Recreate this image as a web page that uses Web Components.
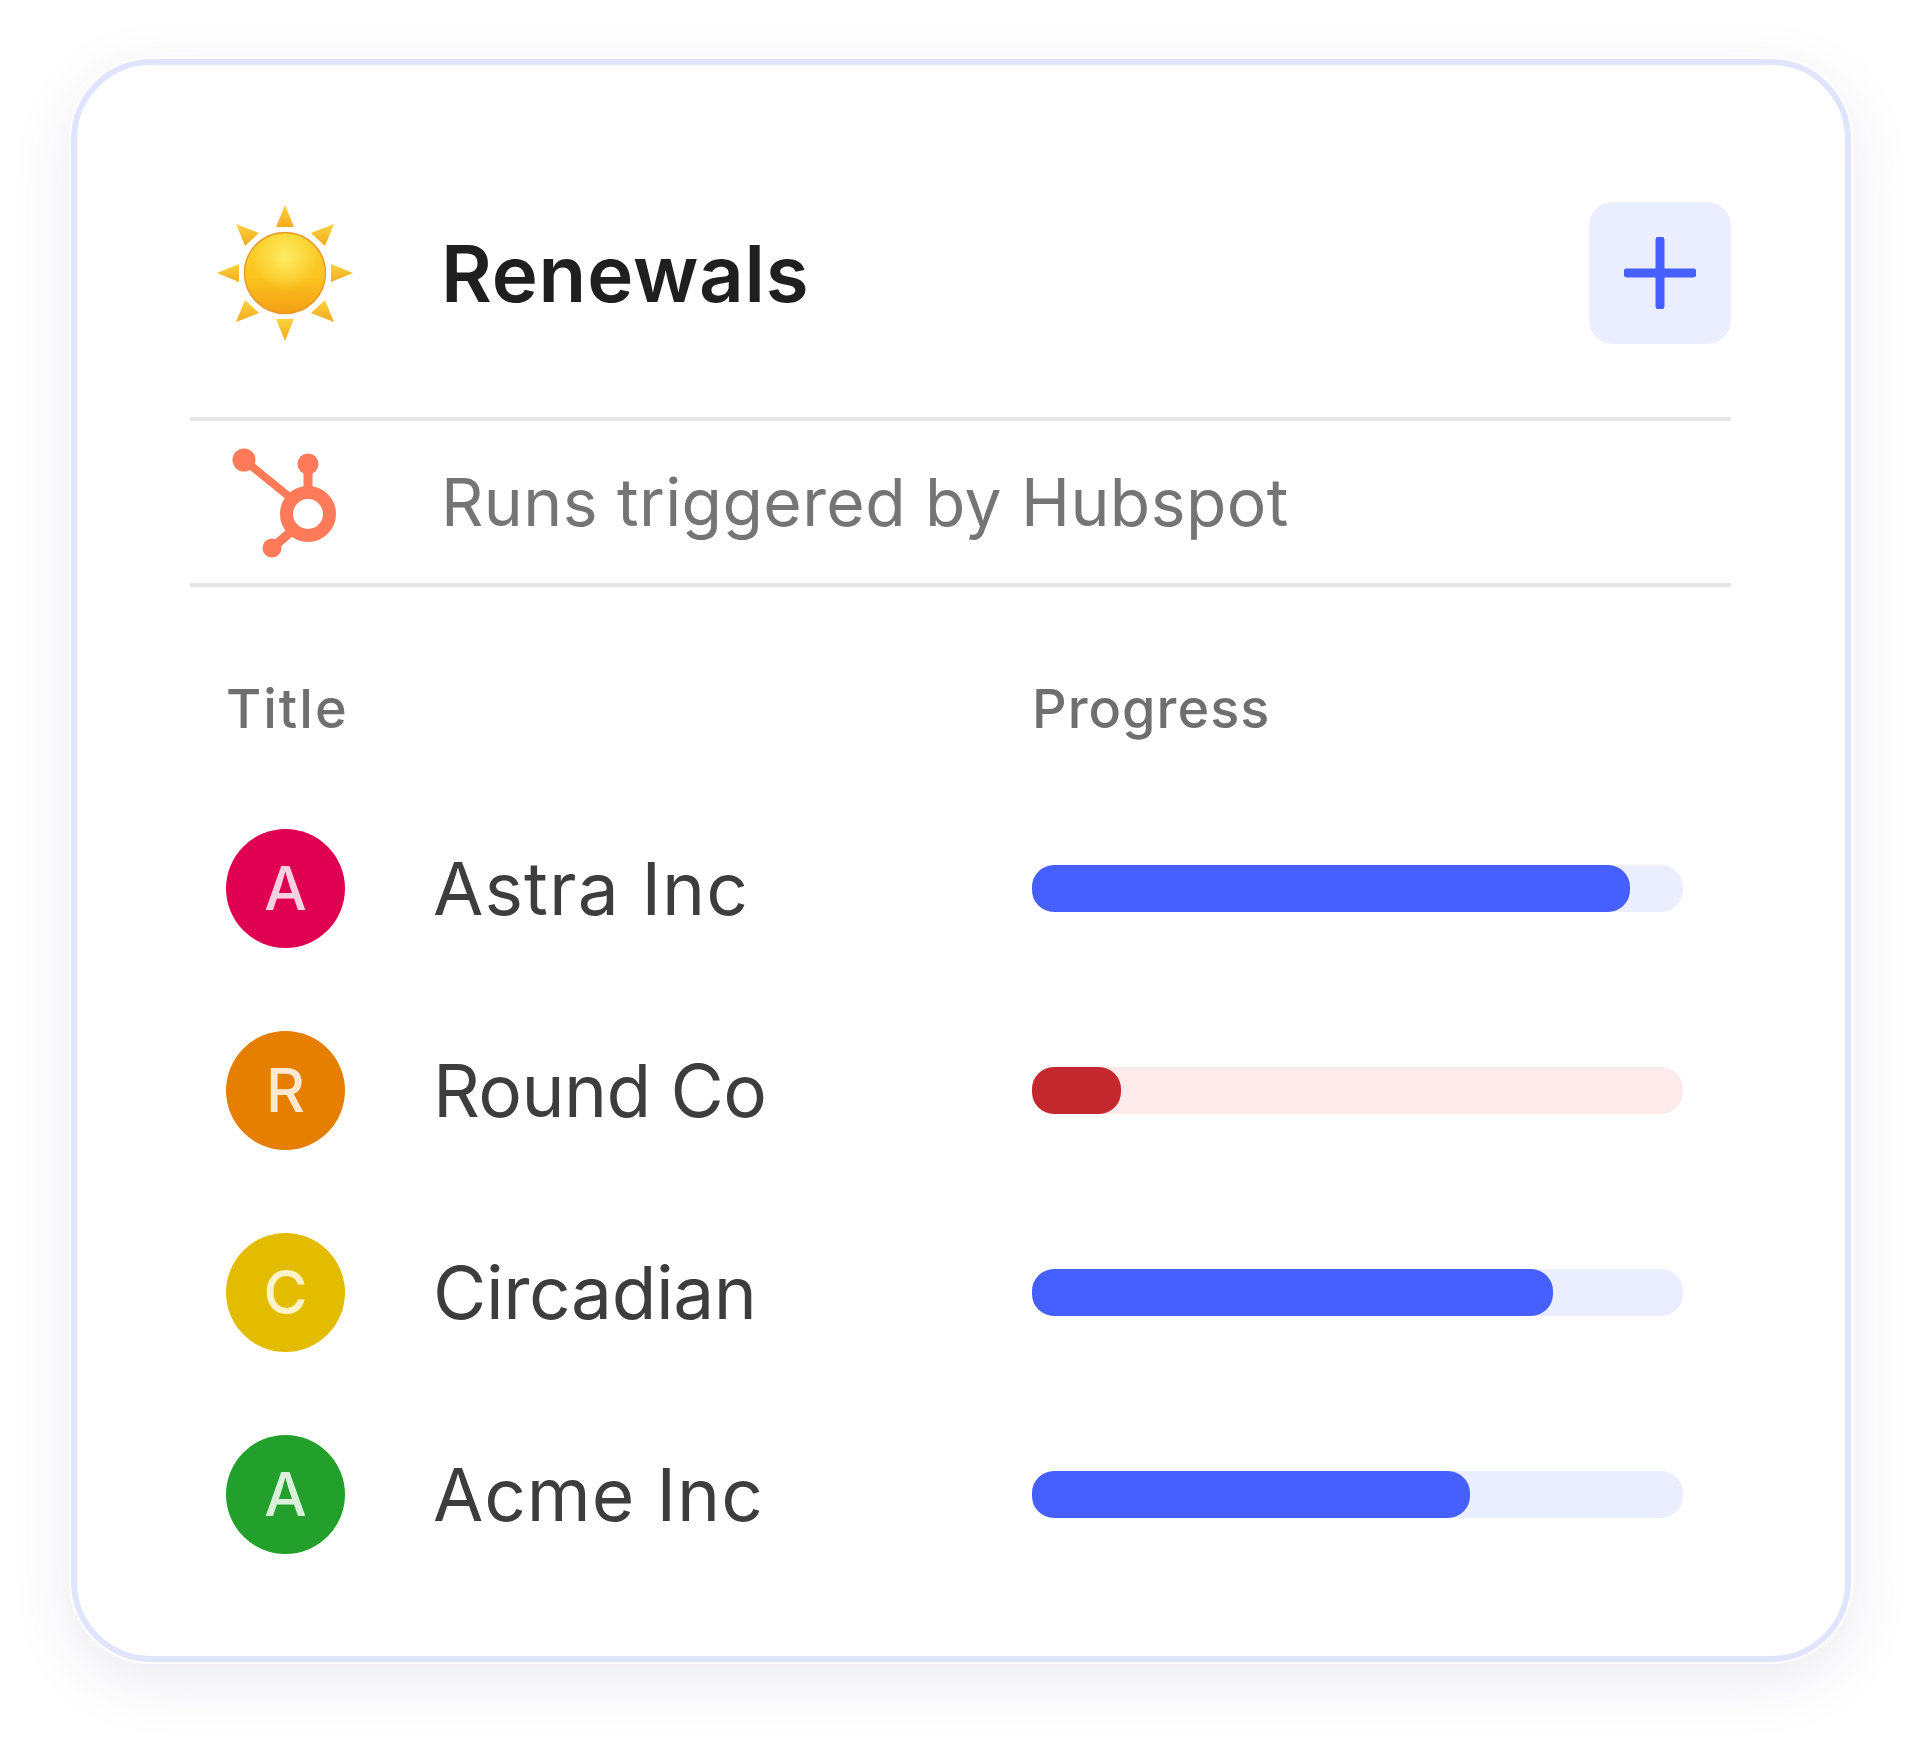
<!DOCTYPE html>
<html>
<head>
<meta charset="utf-8">
<title>Renewals</title>
<style>
	html, body { margin: 0; background: #fff; }
	body { display: flow-root; box-sizing: border-box; min-height: 1742px; padding: 59px 0 0 71px; font-family: "Inter", "Noto Sans", sans-serif; }
</style>
</head>
<body>
<renewals-card>
	<span slot="title">Renewals</span>
	<span slot="source">Runs triggered by Hubspot</span>
	<run-row initial="A" name="Astra Inc" avatar="#e00052" letter="#fbd0e0" value="91.8" tracking="1.1"></run-row>
	<run-row initial="R" name="Round Co" avatar="#e67e00" letter="#fde8d0" value="13.6" tone="danger" tracking="-0.6"></run-row>
	<run-row initial="C" name="Circadian" avatar="#e3bc00" letter="#fcf4c8" value="80" tracking="-0.4"></run-row>
	<run-row initial="A" name="Acme Inc" avatar="#23a02b" letter="#d9f0da" value="67.3" tracking="0.9"></run-row>
</renewals-card>
<script>
class RenewalsCard extends HTMLElement {
	connectedCallback() {
		const shadow = this.attachShadow( { mode: 'open' } );
		shadow.innerHTML = `
			<style>
				:host {
					display: block;
					box-sizing: border-box;
					width: 1780px;
					height: 1603px;
					padding: 137px 114px 0 113px;
					background: #fff;
					border: 6px solid #e0e5fd;
					border-radius: 80px;
					box-shadow: 0 0 0 2px #fff, 0 18px 64px rgba( 60, 40, 100, 0.1 );
				}
				.header {
					display: grid;
					grid-template-columns: 251px 1fr 142px;
					align-items: center;
					height: 142px;
					padding-bottom: 73px;
					border-bottom: 4px solid #e6e6e6;
				}
				.sun { width: 136px; height: 136px; margin-left: 27px; display: block; }
				.title { font-size: 78px; font-weight: 600; color: #1f1f1f; letter-spacing: 0.8px; }
				.plus {
					display: flex;
					align-items: center;
					justify-content: center;
					width: 142px;
					height: 142px;
					border-radius: 24px;
					background: #ebeefe;
				}
				.source {
					display: grid;
					grid-template-columns: 251px 1fr;
					align-items: center;
					height: 162px;
					border-bottom: 4px solid #e6e6e6;
				}
				.hubspot { width: 108px; height: 120px; margin-left: 41px; display: block; }
				.text { font-size: 66px; color: #757575; letter-spacing: 0.4px; }
				.columns {
					display: grid;
					grid-template-columns: 806px 1fr;
					padding: 92px 0 0 36px;
					font-size: 54px;
					font-weight: 500;
					color: #6f6f6f;
					letter-spacing: 1px;
					line-height: 60px;
				}
				.columns span:first-child { letter-spacing: 2px; }
				.rows { display: grid; grid-auto-rows: 202px; padding-top: 48px; }
			</style>
			<div class="header">
				<svg class="sun" viewBox="0 0 136 136">
					<defs>
						<linearGradient id="disc" x1="0" y1="0" x2="0" y2="1">
							<stop offset="0" stop-color="#fbd22e"/>
							<stop offset="0.55" stop-color="#fbc41f"/>
							<stop offset="1" stop-color="#f39f14"/>
						</linearGradient>
						<radialGradient id="glow" cx="0.5" cy="0.3" r="0.42">
							<stop offset="0" stop-color="#fdf06a" stop-opacity="0.9"/>
							<stop offset="1" stop-color="#fdf06a" stop-opacity="0"/>
						</radialGradient>
						<linearGradient id="ray" x1="0" y1="0" x2="0" y2="1">
							<stop offset="0" stop-color="#fbd23f"/>
							<stop offset="1" stop-color="#f4aa1f"/>
						</linearGradient>
					</defs>
					<circle cx="68" cy="68" r="40.5" fill="url(#disc)" stroke="#ea9a2a" stroke-width="1.5"/>
					<circle cx="68" cy="68" r="39" fill="url(#glow)"/>
					<g fill="url(#ray)">
						<path d="M68 0 L77 22 L59 22 Z"/>
						<path d="M68 136 L77 114 L59 114 Z"/>
						<path d="M0 68 L22 59 L22 77 Z"/>
						<path d="M136 68 L114 59 L114 77 Z"/>
						<path d="M19 19 L42 28 L28 41 Z"/>
						<path d="M117 19 L94 28 L108 41 Z"/>
						<path d="M19 117 L42 108 L28 95 Z"/>
						<path d="M117 117 L94 108 L108 95 Z"/>
					</g>
				</svg>
				<div class="title"><slot name="title"></slot></div>
				<div class="plus">
					<svg width="72" height="72" viewBox="0 0 72 72"><path d="M36 3 V69 M3 36 H69" stroke="#4660ff" stroke-width="9" stroke-linecap="round" fill="none"/></svg>
				</div>
			</div>
			<div class="source">
				<svg class="hubspot" viewBox="0 0 108 120">
					<g fill="none" stroke="#ff7a59">
						<circle cx="77" cy="72" r="21.5" stroke-width="13"/>
						<path d="M13 18 L61 57" stroke-width="8"/>
						<path d="M77 22 V50 M41 106 L62 88" stroke-width="9"/>
					</g>
					<g fill="#ff7a59">
						<circle cx="13" cy="18" r="11.5"/>
						<circle cx="77" cy="22" r="10.5"/>
						<circle cx="41" cy="106" r="9.5"/>
					</g>
				</svg>
				<div class="text"><slot name="source"></slot></div>
			</div>
			<div class="columns"><span>Title</span><span>Progress</span></div>
			<div class="rows"><slot></slot></div>
		`;
	}
}

class RunRow extends HTMLElement {
	connectedCallback() {
		const shadow = this.attachShadow( { mode: 'open' } );
		const danger = this.getAttribute( 'tone' ) === 'danger';
		shadow.innerHTML = `
			<style>
				:host {
					display: grid;
					grid-template-columns: 119px 1fr 651px;
					align-items: center;
					column-gap: 88px;
					padding: 0 48px 0 36px;
				}
				.avatar {
					display: flex;
					align-items: center;
					justify-content: center;
					width: 119px;
					height: 119px;
					border-radius: 50%;
					font-size: 60px;
					font-weight: 500;
				}
				.name { font-size: 73px; color: #3d3d3d; letter-spacing: ${ this.getAttribute( 'tracking' ) }px; }
				.track { height: 47px; border-radius: 22px; background: ${ danger ? '#fdeaea' : '#ebeefe' }; }
				.fill { height: 100%; border-radius: 22px; background: ${ danger ? '#c4282e' : '#4660ff' }; }
			</style>
			<div class="avatar" style="background: ${ this.getAttribute( 'avatar' ) }; color: ${ this.getAttribute( 'letter' ) }">${ this.getAttribute( 'initial' ) }</div>
			<div class="name">${ this.getAttribute( 'name' ) }</div>
			<div class="track"><div class="fill" style="width: ${ this.getAttribute( 'value' ) }%"></div></div>
		`;
	}
}

window.customElements.define( 'renewals-card', RenewalsCard );
window.customElements.define( 'run-row', RunRow );
</script>
</body>
</html>
